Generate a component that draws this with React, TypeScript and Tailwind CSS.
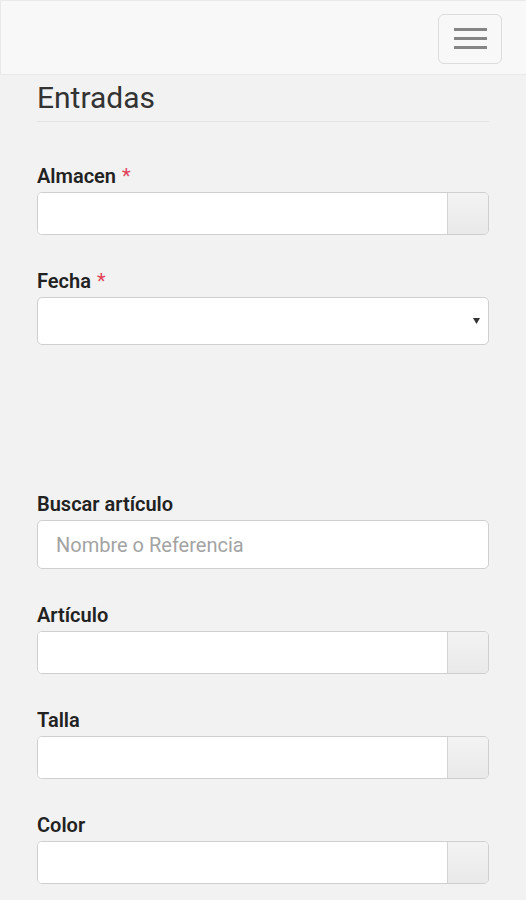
import React from 'react';

const font = { fontFamily: 'Roboto, "Noto Sans", sans-serif' };

const Label: React.FC<{ text: string; required?: boolean }> = ({ text, required }) => (
  <label className="block text-[20px] leading-[24px] font-semibold text-[#222] mb-[4px]">
    {text}
    {required && <span className="text-[#e0435a] font-normal ml-[6px]">*</span>}
  </label>
);

const AddonInput: React.FC = () => (
  <div className="flex h-[43px] w-full rounded-[5px] border border-[#cfcfcf] bg-white overflow-hidden">
    <input type="text" className="flex-1 min-w-0 bg-white outline-none px-3" />
    <button
      type="button"
      className="w-[41px] border-l border-[#d4d4d4] bg-gradient-to-b from-[#f3f3f3] to-[#e9e9e9]"
      aria-label="Buscar"
    />
  </div>
);

export default function App() {
  return (
    <div className="min-h-[900px] bg-[#f2f2f2]" style={font}>
      <nav className="h-[75px] bg-[#f8f8f8] border-t border-l border-b border-[#e9e9e9] flex items-center justify-end pr-[24px]">
        <button
          type="button"
          aria-label="Menu"
          className="w-[64px] h-[50px] mt-[2px] rounded-[6px] border border-[#dcdcdc] flex flex-col items-center justify-center gap-[6px]"
        >
          <span className="block w-[33px] h-[3px] bg-[#858585]" />
          <span className="block w-[33px] h-[3px] bg-[#858585]" />
          <span className="block w-[33px] h-[3px] bg-[#858585]" />
        </button>
      </nav>

      <main className="px-[37px]">
        <h1 className="pt-[4px] text-[30px] leading-[38px] font-normal text-[#333] pb-[4px] border-b border-[#e3e3e3]">
          Entradas
        </h1>

        <div className="mt-[42px]">
          <Label text="Almacen" required />
          <AddonInput />
        </div>

        <div className="mt-[34px]">
          <Label text="Fecha" required />
          <div className="relative h-[48px] rounded-[5px] border border-[#cfcfcf] bg-white">
            <svg
              className="absolute right-[8px] top-[20px]"
              width="7"
              height="6"
              viewBox="0 0 7 6"
            >
              <path d="M0 0h7L3.5 6z" fill="#333" />
            </svg>
          </div>
        </div>

        <div className="h-[147px]" />

        <div>
          <Label text="Buscar artículo" />
          <input
            type="text"
            placeholder="Nombre o Referencia"
            className="block w-full h-[49px] rounded-[5px] border border-[#cfcfcf] bg-white px-[18px] text-[20px] placeholder:text-[#a3a3a3] outline-none"
          />
        </div>

        <div className="mt-[34px]">
          <Label text="Artículo" />
          <AddonInput />
        </div>

        <div className="mt-[34px]">
          <Label text="Talla" />
          <AddonInput />
        </div>

        <div className="mt-[34px]">
          <Label text="Color" />
          <AddonInput />
        </div>
      </main>
    </div>
  );
}
